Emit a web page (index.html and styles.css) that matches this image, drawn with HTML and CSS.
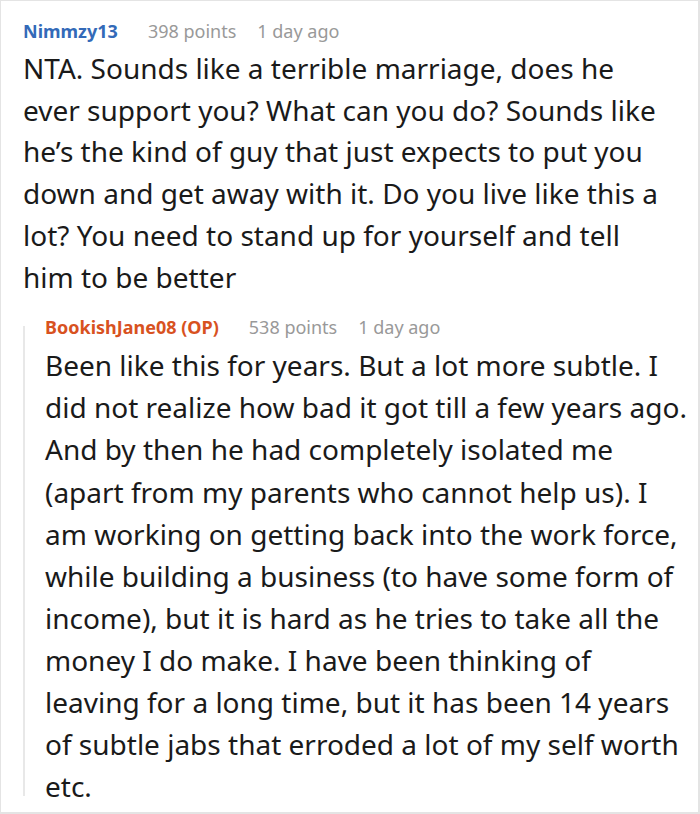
FILE: index.html
```html
<!DOCTYPE html>
<html>
<head>
<meta charset="utf-8">
<link rel="stylesheet" href="styles.css">
</head>
<body>
<div class="frame">
  <div class="comment">
    <div class="meta">
      <span class="author">Nimmzy13</span>
      <span class="info">398 points</span>
      <span class="info">1 day ago</span>
    </div>
    <p class="text">NTA. Sounds like a terrible marriage, does he ever support you? What can you do? Sounds like he’s the kind of guy that just expects to put you down and get away with it. Do you live like this a lot? You need to stand up for yourself and tell him to be better</p>
    <div class="reply">
      <div class="meta">
        <span class="author op">BookishJane08 (OP)</span>
        <span class="info">538 points</span>
        <span class="info">1 day ago</span>
      </div>
      <p class="text">Been like this for years. But a lot more subtle. I did not realize how bad it got till a few years ago. And by then he had completely isolated me (apart from my parents who cannot help us). I am working on getting back into the work force, while building a business (to have some form of income), but it is hard as he tries to take all the money I do make. I have been thinking of leaving for a long time, but it has been 14 years of subtle jabs that erroded a lot of my self worth etc.</p>
    </div>
  </div>
</div>
</body>
</html>
```
FILE: styles.css
```css
html, body {
  margin: 0;
  padding: 0;
  background: #fff;
}
.frame {
  width: 700px;
  height: 814px;
  box-sizing: border-box;
  border: 1px solid #e4e4e4;
  border-right-width: 2px;
  border-bottom-width: 2px;
  overflow: hidden;
  font-family: "Noto Sans", "Open Sans", sans-serif;
}
.comment {
  padding: 18px 0 0 22px;
}
.meta {
  display: flex;
  align-items: baseline;
  font-size: 18px;
  line-height: 24px;
}
.author {
  color: #336ab8;
  font-weight: 700;
  margin-right: 30px;
}
.info {
  color: #999;
  margin-right: 21px;
}
.author.op {
  color: #d8521f;
}
.text {
  margin: 5px 0 0;
  font-size: 28px;
  line-height: 41.7px;
  color: #1a1a1a;
  padding-right: 40px;
}
.reply {
  position: relative;
  margin-top: 17px;
  padding-left: 22px;
}
.reply::before {
  content: "";
  position: absolute;
  left: 0;
  top: 11px;
  bottom: 11px;
  width: 2px;
  background: #e8e8e8;
}
.reply .text {
  margin-top: 5px;
  line-height: 42.1px;
  padding-right: 10px;
}
```
